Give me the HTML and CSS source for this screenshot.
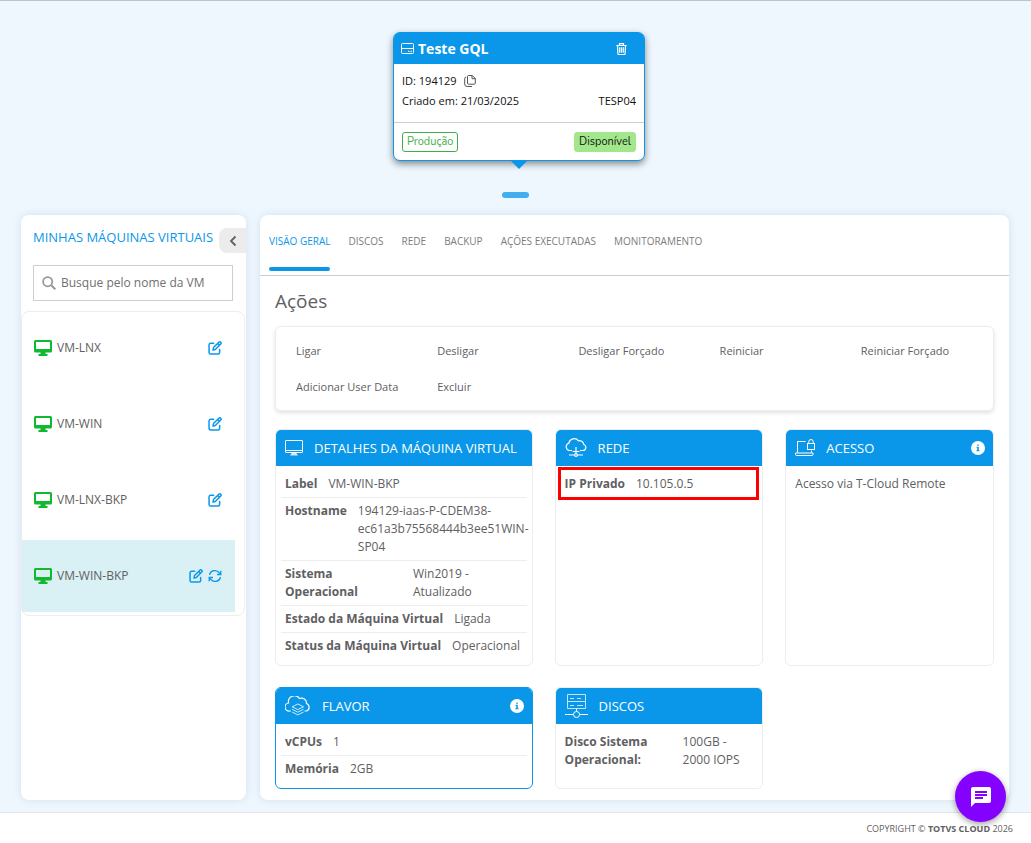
FILE: index.html
```html
<!DOCTYPE html>
<html lang="pt-BR">
<head>
  <meta charset="UTF-8" />
  <meta name="viewport" content="width=device-width, initial-scale=1.0"/>
  <title>TOTVS Cloud</title>
  <link rel="stylesheet" href="styles.css">
</head>
<body>
  <!-- shared icons -->
  <svg class="sprite" aria-hidden="true">
    <symbol id="monitor" viewBox="0 0 18 16">
      <path fill="currentColor" fill-rule="evenodd" d="M1.5 0h15A1.5 1.5 0 0 1 18 1.500v9.500A1.500 1.500 0 0 1 16.500 12.500H11.500V14h2v2h-9v-2h2v-1.500H1.500A1.500 1.500 0 0 1 0 11V1.500A1.500 1.500 0 0 1 1.500 0zM2 2v7h14V2z"/>
    </symbol>
    <symbol id="edit" viewBox="0 0 16 16">
      <g fill="none" stroke="currentColor" stroke-width="1.7" stroke-linejoin="round" stroke-linecap="round">
        <path d="M6.500 2.700H3A1.800 1.800 0 0 0 1.200 4.500v8.500A1.800 1.800 0 0 0 3 14.800h8.500a1.800 1.800 0 0 0 1.800-1.800V9.800"/>
        <path d="M5.700 10.300l.6-2.800L12.400 1.400a1.400 1.400 0 0 1 2.100 2.100L8.400 9.700zM11 2.900l2.100 2.100"/>
      </g>
    </symbol>
    <symbol id="info" viewBox="0 0 14 14">
      <circle cx="7" cy="7" r="7" fill="#fff"/>
      <path fill="#0a97ea" d="M6.200 3.500h1.600v1.300H6.200zM5.500 5.800h2.300v3.500h.8v1H5.400v-1h.8V6.800h-.7z"/>
    </symbol>
  </svg>

  <main class="page">
    <div class="cloud-row">
      <article class="cloud-card">
        <header class="cloud-head">
          <svg class="ico-disk" viewBox="0 0 13 11"><path fill="none" stroke="currentColor" d="M1.500.5h10a1 1 0 0 1 1 1v8a1 1 0 0 1-1 1h-10a1 1 0 0 1-1-1v-8a1 1 0 0 1 1-1zM.5 5.500h12M7 8.300h1.500M9.500 8.300H11"/></svg>
          <h1>Teste GQL</h1>
          <button class="icon-btn trash" aria-label="Excluir cloud">
            <svg viewBox="0 0 11 12"><path fill="none" stroke="currentColor" stroke-width="1.200" d="M.3 2.500h10.400M3.500 2.300V.6h4v1.700M1.500 2.500l.4 8.200a.8.8 0 0 0 .8.800h5.600a.8.800 0 0 0 .8-.8l.4-8.200M3.700 4.300v5.400M5.500 4.300v5.400M7.300 4.300v5.400"/></svg>
          </button>
        </header>
        <div class="cloud-info">
          <div class="cloud-line">
            <span>ID: 194129</span>
            <button class="icon-btn copy" aria-label="Copiar ID">
              <svg viewBox="0 0 12 12"><path fill="none" stroke="currentColor" d="M4.500.5h3.800l3 3v4.700a1 1 0 0 1-1 1H4.500a1 1 0 0 1-1-1V1.500a1 1 0 0 1 1-1zM8 .5v3.200h3.300M2.200 2.200a1.300 1.300 0 0 0-1.500 1.300v5.500a2.500 2.500 0 0 0 2.500 2.500H8"/></svg>
            </button>
          </div>
          <div class="cloud-line">
            <span>Criado em: 21/03/2025</span>
            <span class="site">TESP04</span>
          </div>
        </div>
        <footer class="cloud-foot">
          <span class="badge outline">Produção</span>
          <span class="badge solid">Disponível</span>
        </footer>
      </article>
    </div>
    <div class="pager"></div>

    <div class="columns">
      <aside class="sidebar">
        <div class="side-head">
          <h2>MINHAS MÁQUINAS VIRTUAIS</h2>
          <button class="collapse" aria-label="Recolher">
            <svg viewBox="0 0 8 12"><path fill="none" stroke="currentColor" stroke-width="1.800" d="M6.500 1.500L2 6l4.500 4.500"/></svg>
          </button>
        </div>
        <label class="search">
          <svg viewBox="0 0 14 14"><circle cx="5.700" cy="5.700" r="4.600" fill="none" stroke="currentColor" stroke-width="1.800"/><path stroke="currentColor" stroke-width="2" d="M9 9l4.300 4.300"/></svg>
          <input type="text" placeholder="Busque pelo nome da VM" aria-label="Busque pelo nome da VM">
        </label>
        <ul class="vm-list">
          <li class="vm">
            <svg class="ico-vm"><use href="#monitor"/></svg>
            <span>VM-LNX</span>
            <button class="icon-btn" aria-label="Editar"><svg><use href="#edit"/></svg></button>
          </li>
          <li class="vm">
            <svg class="ico-vm"><use href="#monitor"/></svg>
            <span>VM-WIN</span>
            <button class="icon-btn" aria-label="Editar"><svg><use href="#edit"/></svg></button>
          </li>
          <li class="vm">
            <svg class="ico-vm"><use href="#monitor"/></svg>
            <span>VM-LNX-BKP</span>
            <button class="icon-btn" aria-label="Editar"><svg><use href="#edit"/></svg></button>
          </li>
          <li class="vm active">
            <svg class="ico-vm"><use href="#monitor"/></svg>
            <span>VM-WIN-BKP</span>
            <button class="icon-btn" aria-label="Editar"><svg><use href="#edit"/></svg></button>
            <button class="icon-btn" aria-label="Atualizar">
              <svg viewBox="0 0 16 16"><g fill="none" stroke="currentColor" stroke-width="1.500"><path d="M1.700 6.800A6.300 6.300 0 0 1 13 4.500l1.200 1.400M14.300 9.200A6.300 6.300 0 0 1 3 11.500l-1.200-1.400"/><path d="M14.600 2v4.300h-4.300M1.400 14V9.700h4.300"/></g></svg>
            </button>
          </li>
        </ul>
      </aside>

      <section class="content">
        <nav class="tabs">
          <a href="#" class="tab active">VISÃO GERAL</a>
          <a href="#" class="tab">DISCOS</a>
          <a href="#" class="tab">REDE</a>
          <a href="#" class="tab">BACKUP</a>
          <a href="#" class="tab">AÇÕES EXECUTADAS</a>
          <a href="#" class="tab">MONITORAMENTO</a>
        </nav>

        <div class="overview">
          <h2 class="title">Ações</h2>
          <div class="actions">
            <button>Ligar</button>
            <button>Desligar</button>
            <button>Desligar Forçado</button>
            <button>Reiniciar</button>
            <button>Reiniciar Forçado</button>
            <button>Adicionar User Data</button>
            <button>Excluir</button>
          </div>

          <div class="cards">
            <section class="card">
              <header>
                <svg class="ico" width="18" height="16" viewBox="0 0 18 16"><path fill="none" stroke="currentColor" d="M1 .5h16a.5.5 0 0 1 .5.5v11a.5.5 0 0 1-.5.5H1a.5.5 0 0 1-.5-.5V1a.5.5 0 0 1 .5-.5zM.5 10.500h17"/><path fill="currentColor" opacity=".8" d="M7 12.500h4l2 3H5z"/></svg>
                <h3>DETALHES DA MÁQUINA VIRTUAL</h3>
              </header>
              <dl>
                <div><dt>Label</dt><dd>VM-WIN-BKP</dd></div>
                <div><dt>Hostname</dt><dd class="host">194129-iaas-P-CDEM38-<br>ec61a3b75568444b3ee51WIN-<br>SP04</dd></div>
                <div class="wide"><dt>Sistema Operacional</dt><dd>Win2019 - Atualizado</dd></div>
                <div><dt>Estado da Máquina Virtual</dt><dd>Ligada</dd></div>
                <div><dt>Status da Máquina Virtual</dt><dd>Operacional</dd></div>
              </dl>
            </section>

            <section class="card">
              <header>
                <svg class="ico" width="22" height="19" viewBox="0 0 22 19"><g fill="none" stroke="currentColor" stroke-width="1.200"><path d="M7 12.500H4.600A3.700 3.700 0 0 1 3.800 5.300 5.500 5.500 0 0 1 13.500 2.800 4.200 4.200 0 0 1 18.800 6.500 3.100 3.100 0 0 1 18 12.500H15M11 9v7M4 17h5M13 17h5M7.500 13.500h7"/><circle cx="11" cy="17" r="1.400"/></g></svg>
                <h3>REDE</h3>
              </header>
              <dl>
                <div class="highlight"><dt>IP Privado</dt><dd>10.105.0.5</dd></div>
              </dl>
            </section>

            <section class="card">
              <header>
                <svg class="ico" width="20" height="17" viewBox="0 0 20 17"><g fill="none" stroke="currentColor"><path d="M2.500 13.500V2.500h8M16.500 11.500v2M.5 14h17.500v1.500a1 1 0 0 1-1 1h-15.500a1 1 0 0 1-1-1z"/><rect x="12.500" y="4.500" width="7" height="6"/><path d="M13.800 4.500V2.700a2.200 2.200 0 0 1 4.400 0v1.800"/></g></svg>
                <h3>ACESSO</h3>
                <svg class="info"><use href="#info"/></svg>
              </header>
              <p>Acesso via T-Cloud Remote</p>
            </section>

            <section class="card selected">
              <header>
                <svg class="ico" width="26" height="20" viewBox="0 0 26 20"><g fill="none" stroke="currentColor"><path stroke-width="1.200" d="M6 15H4.600A4 4 0 0 1 3.600 7 6 6 0 0 1 14.500 2.500 5 5 0 0 1 21.500 7.500 4 4 0 0 1 21.500 15H19.500"/><path stroke-width=".8" d="M12.800 8l5.700 2.800-5.700 2.800-5.700-2.800zM7.100 13.300l5.700 2.900 5.700-2.900M7.100 16l5.700 2.900 5.700-2.900"/></g></svg>
                <h3>FLAVOR</h3>
                <svg class="info"><use href="#info"/></svg>
              </header>
              <dl>
                <div><dt>vCPUs</dt><dd>1</dd></div>
                <div><dt>Memória</dt><dd>2GB</dd></div>
              </dl>
            </section>

            <section class="card">
              <header>
                <svg class="ico" width="23" height="24" viewBox="0 0 23 24"><g fill="none" stroke="currentColor"><path opacity=".75" d="M2.500.5h18v14h-18zM2.500 7.500h18M5 4.500h4M12 4.500h4M5 11.500h4M12 11.500h6"/><path d="M11.500 14.500v3M0 20.500h8.500M14.500 20.500H23"/><circle cx="11.500" cy="20.500" r="3"/></g></svg>
                <h3>DISCOS</h3>
              </header>
              <dl>
                <div class="wide"><dt>Disco Sistema Operacional:</dt><dd>100GB - 2000 IOPS</dd></div>
              </dl>
            </section>
          </div>
        </div>
      </section>
    </div>
  </main>

  <footer class="footer">COPYRIGHT © <strong>TOTVS CLOUD</strong> 2026</footer>

  <button class="chat" aria-label="Chat">
    <svg viewBox="0 0 20 20"><path fill="#fff" d="M2 0h16a2 2 0 0 1 2 2v12a2 2 0 0 1-2 2H4l-4 4V2a2 2 0 0 1 2-2z"/><path stroke="#8400ff" stroke-width="1.800" d="M4 5h12M4 8h12M4 11h8"/></svg>
  </button>
</body>
</html>
```
FILE: styles.css
```css
* { margin: 0; padding: 0; box-sizing: border-box; }

body {
  min-height: 100vh;
  display: flex;
  flex-direction: column;
  border-top: 1px solid #b9c6d2;
  background: #eef7fe;
  font-family: 'Open Sans', 'Noto Sans', sans-serif;
  font-size: 12px;
  line-height: 18px;
  color: #5f6062;
}

button {
  border: 0;
  background: none;
  font: inherit;
  color: inherit;
  cursor: pointer;
}

ul { list-style: none; }
svg { display: block; flex: none; }
.sprite { display: none; }

.page {
  flex: 1;
  padding: 31px 22px 12px 21px;
}

/* cloud card */
.cloud-row {
  display: flex;
  justify-content: center;
  padding-left: 8px;
}

.cloud-card {
  position: relative;
  width: 252px;
  background: #fff;
  border: 1px solid #0a97ea;
  border-radius: 7px;
  box-shadow: 0 3px 7px rgba(0, 0, 0, 0.45);
  font-size: 11px;
  color: #111;
}

.cloud-card::after {
  content: '';
  position: absolute;
  top: 100%;
  left: 50%;
  margin-left: -9px;
  border: 9px solid transparent;
  border-top-color: #0a97ea;
  border-bottom: 0;
}

.cloud-head {
  display: flex;
  align-items: center;
  gap: 4px;
  height: 31px;
  padding: 0 17px 0 7px;
  background: #0a97ea;
  border-radius: 5px 5px 0 0;
  color: #fff;
}

.cloud-head h1 { font-size: 14px; font-weight: 700; }
.ico-disk { width: 13px; height: 11px; }
.trash { margin-left: auto; }
.trash svg { width: 11px; height: 12px; }

.cloud-info { padding: 7px 8px 11px; }

.cloud-line {
  display: flex;
  align-items: center;
  gap: 7px;
  height: 20px;
}

.copy { color: #555; }
.copy svg { width: 12px; height: 12px; }
.site { margin-left: auto; }

.cloud-foot {
  display: flex;
  justify-content: space-between;
  padding: 9px 8px 8px;
  border-top: 1px solid #c9cfd3;
}

.badge {
  height: 20px;
  padding: 0 4px;
  border: 1px solid #3fae49;
  border-radius: 3px;
  font-family: 'Nunito', 'Open Sans', sans-serif;
  line-height: 17px;
}

.badge.outline { color: #3fae49; }
.badge.solid { background: #a3e78c; border-color: #a3e78c; }

.pager {
  width: 27px;
  height: 6px;
  margin: 31px auto 17px;
  border-radius: 3px;
  background: #43adf0;
}

/* sidebar */
.columns {
  display: grid;
  grid-template-columns: 225px minmax(0, 1fr);
  gap: 14px;
}

.sidebar, .content {
  background: #fff;
  border-radius: 8px;
  box-shadow: 0 0 8px rgba(60, 90, 120, 0.14);
}

.side-head {
  display: flex;
  align-items: center;
  justify-content: space-between;
  padding: 13px 0 12px 12px;
}

.side-head h2 {
  font-size: 13px;
  font-weight: 400;
  line-height: 19px;
  padding-bottom: 6px;
  white-space: nowrap;
  color: #0a97ea;
}

.collapse {
  display: grid;
  place-items: center;
  width: 27px;
  height: 25px;
  border-radius: 8px 0 0 8px;
  background: #ececec;
}

.collapse svg { width: 8px; height: 12px; }

.search {
  display: flex;
  align-items: center;
  gap: 5px;
  height: 36px;
  margin: 0 13px 10px 12px;
  padding: 0 8px;
  border: 1px solid #c9cfd6;
}

.search svg { width: 14px; height: 14px; color: #999; }

.search input {
  flex: 1;
  min-width: 0;
  border: 0;
  outline: 0;
  background: none;
  font: inherit;
}

.search input::placeholder { color: #707070; opacity: 1; }

.vm-list {
  display: grid;
  gap: 4px;
  margin-right: 1px;
  padding-bottom: 3px;
  border: 1px solid #ededed;
  border-radius: 8px;
}

.vm {
  display: flex;
  align-items: center;
  gap: 5px;
  height: 72px;
  margin-right: 9px;
  padding: 0 13px 0 12px;
}

.vm.active { background: #d9f0f4; }
.vm span { flex: 1; }
.ico-vm { width: 18px; height: 16px; color: #10b92f; }
.vm .icon-btn { color: #0a97ea; }
.vm .icon-btn svg { width: 14px; height: 14px; }

/* tabs */
.tabs {
  display: flex;
  gap: 18px;
  height: 61px;
  padding: 0 9px 4px;
  border-bottom: 1px solid #c6cfd6;
  font-size: 10px;
}

.tab {
  padding-top: 17px;
  border-bottom: 4px solid transparent;
  color: #7c7c7c;
  text-decoration: none;
}

.tab.active {
  position: relative;
  color: #0a97ea;
}

.tab.active::after {
  content: '';
  position: absolute;
  left: 0;
  right: 0;
  bottom: -4px;
  height: 4px;
  border-radius: 2px;
  background: #0a97ea;
}

/* overview */
.overview { padding: 13px 15px 11px; }

.title {
  margin-bottom: 13px;
  font-size: 19px;
  font-weight: 400;
  line-height: 24px;
}

.actions {
  display: grid;
  grid-template-columns: repeat(5, 1fr);
  gap: 18px 29px;
  margin-bottom: 18px;
  padding: 15px 20px 14px;
  border: 1px solid #ededed;
  border-radius: 6px;
  box-shadow: 0 2px 4px rgba(0, 0, 0, 0.12);
  font-size: 11px;
}

.actions button { text-align: left; white-space: nowrap; }

.cards {
  display: grid;
  grid-template-columns: minmax(0, 258fr) minmax(0, 209fr) minmax(0, 209fr);
  gap: 21px 22px;
}

.card {
  border: 1px solid #ededed;
  border-radius: 6px;
}

.card.selected { border-color: #0a97ea; }

.card header {
  display: flex;
  align-items: center;
  gap: 11px;
  height: 36px;
  padding: 0 8px 1px 9px;
  border-radius: 5px 5px 0 0;
  background: #0a97ea;
  color: #fff;
}

.card h3 { font-size: 13px; font-weight: 400; white-space: nowrap; }
.info { width: 14px; height: 14px; margin-left: auto; }
.card p { padding: 9px; }
.card dl { padding: 5px 5px 6px; }

.card dl div {
  position: relative;
  display: flex;
  gap: 11px;
  padding: 4px;
}

.card dl div + div { border-top: 1px solid #ededed; }
.card dt { flex: none; font-weight: 700; }
.card dd { min-width: 0; }
.card .host { white-space: nowrap; }
.card .wide dt { flex: 1 0 107px; }
.card .wide dd { flex: 3 1 80px; }

.highlight::after {
  content: '';
  position: absolute;
  inset: -4px -2px -3px -3px;
  border: 3px solid #ff0000;
}

.footer {
  height: 32px;
  padding: 7px 18px;
  border-top: 1px solid #dfe5ea;
  background: #fff;
  font-size: 9px;
  text-align: right;
}

.chat {
  position: fixed;
  right: 25px;
  bottom: 21px;
  display: grid;
  place-items: center;
  width: 51px;
  height: 51px;
  border-radius: 50%;
  background: #8400ff;
  box-shadow: 0 2px 6px rgba(0, 0, 0, 0.4);
}

.chat svg { width: 20px; height: 20px; }
```
